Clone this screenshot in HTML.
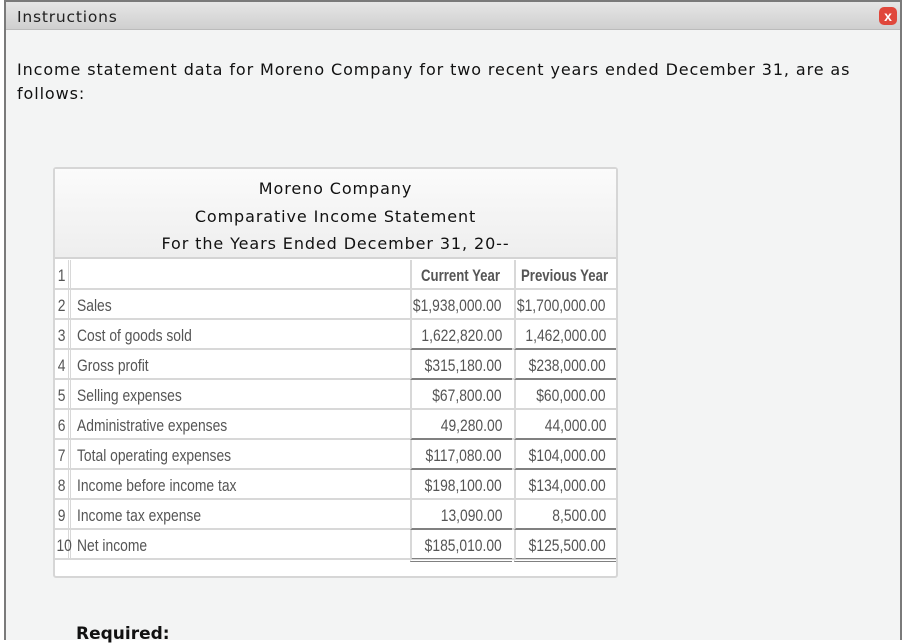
<!DOCTYPE html>
<html><head><meta charset="utf-8"><style>
*{margin:0;padding:0;box-sizing:border-box}
body{width:906px;height:632px;overflow:hidden;background:#fff;font-family:"DejaVu Sans",Verdana,sans-serif;position:relative}
#win{position:absolute;left:4px;top:0;width:898px;height:640px;border:2px solid #7a7a7a;border-bottom:none;background:#f3f4f4}
#bar{position:absolute;left:0;top:0;width:894px;height:28px;background:linear-gradient(#e6e6e6,#cfcfcf);border-bottom:1px solid #bbb}
#bar span{position:absolute;left:11px;top:6px;font-size:15.5px;letter-spacing:0.8px;color:#222}
#x{position:absolute;left:873px;top:5px;width:18px;height:18px;border-radius:5px;background:#e0473b;color:#fff;font:bold 14px/18px "Liberation Sans",sans-serif;text-align:center}
#intro{position:absolute;left:11px;top:56px;width:870px;font-size:16px;letter-spacing:0.9px;line-height:24px;color:#111}
#box{position:absolute;left:53px;top:167px;width:565px;height:411px;border:2px solid #d6d6d6;border-radius:3px;background:#fff}
#hd{position:absolute;left:0;top:0;width:561px;height:90px;background:linear-gradient(#fbfbfb,#eeeeee);border-bottom:2px solid #d4d4d4;text-align:center;font-size:16px;letter-spacing:0.9px;color:#111}
#hd div{position:absolute;left:0;width:561px}
.r{position:absolute;left:0;width:561px;height:30px;border-bottom:2px solid #d8d8d8;font-family:"Liberation Sans",sans-serif;font-size:16.5px;color:#555;line-height:32px}
.r span{display:inline-block;transform:scaleX(.84);white-space:nowrap}
.n{position:absolute;left:0;width:16px;height:28px;border-right:3px double #d8d8d8;text-align:center}
.l{position:absolute;left:22px}
.l span{transform-origin:left}
.c{position:absolute;left:355px;width:102px;height:28px;border-left:2px solid #d8d8d8}
.p{position:absolute;left:459px;width:102px;height:28px;border-left:2px solid #d8d8d8}
.c span,.p span{position:absolute;right:10px;top:0;transform-origin:right}
.b .c,.b .p{border-bottom:2px solid #808080;height:30px}
.dbl .c,.dbl .p{border-bottom:4px double #808080;height:32px}
.h{font-weight:bold}
.h .c span,.h .p span{right:auto;left:50%;transform-origin:left;transform:translateX(-50%) scaleX(.8)}
#req{position:absolute;left:76px;top:624px;font:bold 17px "DejaVu Sans",sans-serif;color:#111}
</style></head><body>
<div id="win">
<div id="bar"><span>Instructions</span><div id="x">x</div></div>
<div id="intro">Income statement data for Moreno Company for two recent years ended December 31, are as follows:</div>
</div>
<div id="box">
<div id="hd"><div style="top:10px">Moreno Company</div><div style="top:38px">Comparative Income Statement</div><div style="top:65px">For the Years Ended December 31, 20--</div></div>
<div class="r h" style="top:91px"><div class="n" style="font-weight:normal"><span>1</span></div><div class="c"><span style="transform:translateX(-41px) scaleX(.8)">Current Year</span></div><div class="p"><span style="transform:translateX(-45px) scaleX(.8)">Previous Year</span></div></div>
<div class="r" style="top:121px"><div class="n"><span>2</span></div><div class="l"><span>Sales</span></div><div class="c"><span>$1,938,000.00</span></div><div class="p"><span>$1,700,000.00</span></div></div>
<div class="r b" style="top:151px"><div class="n"><span>3</span></div><div class="l"><span>Cost of goods sold</span></div><div class="c"><span>1,622,820.00</span></div><div class="p"><span>1,462,000.00</span></div></div>
<div class="r b" style="top:181px"><div class="n"><span>4</span></div><div class="l"><span>Gross profit</span></div><div class="c"><span>$315,180.00</span></div><div class="p"><span>$238,000.00</span></div></div>
<div class="r" style="top:211px"><div class="n"><span>5</span></div><div class="l"><span>Selling expenses</span></div><div class="c"><span>$67,800.00</span></div><div class="p"><span>$60,000.00</span></div></div>
<div class="r b" style="top:241px"><div class="n"><span>6</span></div><div class="l"><span>Administrative expenses</span></div><div class="c"><span>49,280.00</span></div><div class="p"><span>44,000.00</span></div></div>
<div class="r b" style="top:271px"><div class="n"><span>7</span></div><div class="l"><span>Total operating expenses</span></div><div class="c"><span>$117,080.00</span></div><div class="p"><span>$104,000.00</span></div></div>
<div class="r" style="top:301px"><div class="n"><span>8</span></div><div class="l"><span>Income before income tax</span></div><div class="c"><span>$198,100.00</span></div><div class="p"><span>$134,000.00</span></div></div>
<div class="r b" style="top:331px"><div class="n"><span>9</span></div><div class="l"><span>Income tax expense</span></div><div class="c"><span>13,090.00</span></div><div class="p"><span>8,500.00</span></div></div>
<div class="r dbl" style="top:361px"><div class="n"><span>10</span></div><div class="l"><span>Net income</span></div><div class="c"><span>$185,010.00</span></div><div class="p"><span>$125,500.00</span></div></div>
</div>
<div id="req">Required:</div>
</body></html>
